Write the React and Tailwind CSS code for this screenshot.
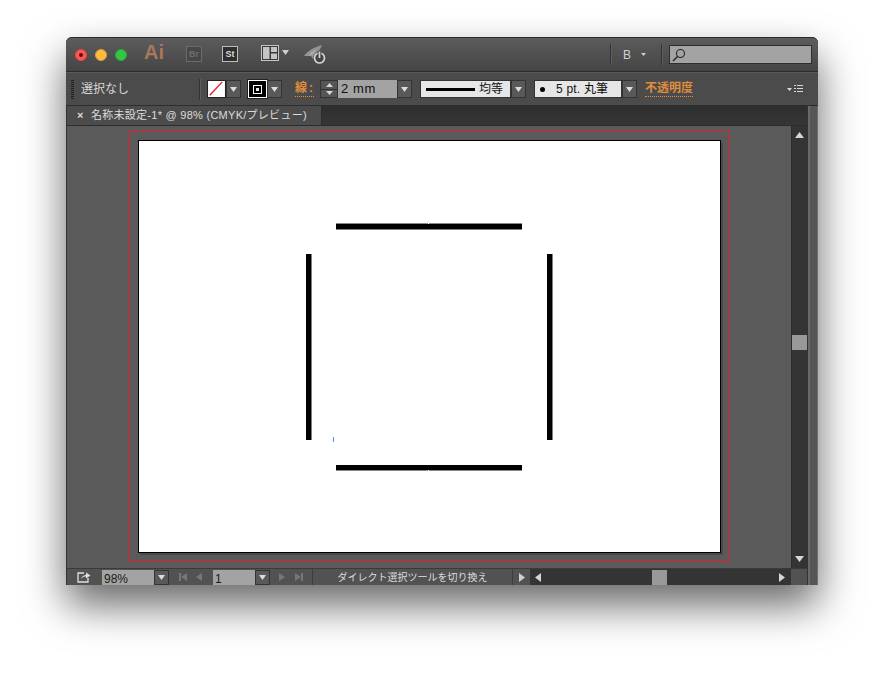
const font = { fontFamily: '"Liberation Sans", "Noto Sans CJK JP", sans-serif' };

function Tri({ dir = "down", w = 7, h = 5, color = "#d4d4d4" }) {
  const points = {
    down: "0,0 10,0 5,10",
    up: "0,10 10,10 5,0",
    left: "10,0 10,10 0,5",
    right: "0,0 0,10 10,5",
  };
  return (
    <svg width={w} height={h} viewBox="0 0 10 10" preserveAspectRatio="none" className="shrink-0 block">
      <polygon points={points[dir]} fill={color} />
    </svg>
  );
}

function Drop() {
  return (
    <div className="w-[15px] h-full flex items-center justify-center border border-[#333] bg-[#595959]">
      <Tri w={7} h={5} color="#dcdcdc" />
    </div>
  );
}

function Sep() {
  return <div className="w-px h-[21px] bg-[#333] border-r border-[#5f5f5f] box-content" />;
}

function TitleBar() {
  return (
    <div className="h-[35px] flex items-center bg-gradient-to-b from-[#5c5c5c] to-[#454545] border-t border-[#2a2a2a] rounded-t-[6px] border-b-[#2c2c2c] border-b">
      <div className="ml-[9px] w-3 h-3 rounded-full bg-[#fc5753] border border-[#df4744] flex items-center justify-center">
        <div className="w-1 h-1 rounded-full bg-[#5a0b08]" />
      </div>
      <div className="ml-2 w-3 h-3 rounded-full bg-[#fdbc40] border border-[#de9f34]" />
      <div className="ml-2 w-3 h-3 rounded-full bg-[#33c748] border border-[#27aa35]" />
      <div className="ml-[17px] w-5 text-[20px] font-bold leading-none text-[#a9775a] mb-[6px]">Ai</div>
      <div className="ml-[22px] w-4 h-4 border border-[#6b6b6b] bg-[#474747] text-[#6f6f6f] text-[9px] font-bold leading-[14px] text-center mb-[2px]">Br</div>
      <div className="ml-[20px] w-4 h-4 border border-[#bdbdbd] bg-[#2f2f2f] text-[#d8d8d8] text-[9px] font-bold leading-[14px] text-center mb-[2px]">St</div>
      <svg width="18" height="16" viewBox="0 0 18 16" className="ml-[23px] mb-[3px]">
        <rect x="0.5" y="0.5" width="17" height="15" fill="#3a3a3a" stroke="#c4c4c4" />
        <rect x="2" y="2" width="6.5" height="12" fill="#c4c4c4" />
        <rect x="10" y="2" width="6" height="5" fill="#c4c4c4" />
        <rect x="10" y="8.5" width="6" height="5.5" fill="#c4c4c4" />
      </svg>
      <div className="ml-[3px] mb-[5px]">
        <Tri w={7} h={5} color="#cfcfcf" />
      </div>
      <svg width="23" height="20" viewBox="0 0 23 20" className="ml-[15px]">
        <path d="M0 11 C3 7 6 5 8 4 C11 2 15 1 18 0 C17 3 15 6 13 7 C10 9 9 11 9 14 L7 11 L4 11 Z" fill="#949494" />
        <path d="M5 11 C6 8 9 6 12 5 L9 9 Z" fill="#b0b0b0" />
        <circle cx="15.5" cy="13" r="5" fill="#454545" stroke="#d4d4d4" strokeWidth="1.7" />
        <path d="M15.5 6.5 V13" stroke="#454545" strokeWidth="3.5" />
        <path d="M15.5 6.5 V13" stroke="#d4d4d4" strokeWidth="1.7" />
      </svg>
      <div className="ml-[283px]"><Sep /></div>
      <div className="ml-[11px] text-[12px] text-[#d0d0d0] w-[12px]">B</div>
      <div className="ml-[6px]"><Tri w={5} h={3} color="#cfcfcf" /></div>
      <div className="ml-[15px]"><Sep /></div>
      <div className="ml-[6px] w-[143px] h-[19px] bg-[#a3a3a3] border border-[#2e2e2e] flex items-center pl-[2px]">
        <svg width="14" height="14" viewBox="0 0 14 14">
          <circle cx="8.5" cy="5.5" r="4" fill="none" stroke="#262626" strokeWidth="1.1" />
          <path d="M5.5 8.5 L1 13" stroke="#262626" strokeWidth="1.4" />
        </svg>
      </div>
    </div>
  );
}

function ControlBar() {
  return (
    <div className="h-[34px] flex items-center bg-[#4b4b4b] border-b border-[#2e2e2e] border-t border-t-[#5a5a5a] text-[12px]">
      <div className="ml-[5px] w-[3px] h-[19px] bg-[repeating-linear-gradient(to_bottom,#1f1f1f_0px,#1f1f1f_1px,#4b4b4b_1px,#4b4b4b_2px)]" />
      <div className="ml-[7px] w-[118px] text-[#d8d8d8]">選択なし</div>
      <Sep />
      <div className="ml-[6px] h-[18px] flex">
        <svg width="19" height="18" viewBox="0 0 19 18" className="border border-[#222]">
          <rect width="19" height="18" fill="#fff" />
          <path d="M2 16 L16 1" stroke="#e0202c" strokeWidth="1.6" />
        </svg>
        <Drop />
      </div>
      <div className="ml-[7px] h-[18px] flex">
        <div className="w-[19px] h-[18px] bg-black border border-white outline outline-[#222] flex items-center justify-center">
          <div className="w-[9px] h-[9px] bg-white flex items-center justify-center">
            <div className="w-[7px] h-[7px] bg-black flex items-center justify-center">
              <div className="w-[3px] h-[3px] bg-[#e8e8e8]" />
            </div>
          </div>
        </div>
        <Drop />
      </div>
      <div className="ml-[13px] w-[19px] text-[#e08e3c] font-bold border-b border-dotted border-[#e08e3c] leading-[15px] tracking-[2px] whitespace-nowrap">線:</div>
      <div className="ml-[6px] w-[18px] h-[18px] border border-[#333] bg-[#555] flex flex-col items-center">
        <div className="flex-1 flex items-center"><Tri dir="up" w={7} h={4} /></div>
        <div className="w-full h-px bg-[#333]" />
        <div className="flex-1 flex items-center"><Tri w={7} h={4} /></div>
      </div>
      <div className="w-[59px] h-[18px] bg-[#a3a3a3] text-[13px] text-[#111] leading-[18px] pl-[3px] tracking-[0.6px]">2 mm</div>
      <div className="h-[18px]"><Drop /></div>
      <div className="ml-[8px] h-[18px] w-[91px] bg-[#e6e6e6] border border-[#333] flex items-center pl-[5px] gap-[4px]">
        <div className="w-[49px] h-[3px] bg-black" />
        <span className="text-[12px] text-[#111] whitespace-nowrap">均等</span>
      </div>
      <div className="h-[18px]"><Drop /></div>
      <div className="ml-[8px] h-[18px] w-[88px] bg-[#e6e6e6] border border-[#333] flex items-center pl-[5px] text-[12px] text-[#111] whitespace-nowrap">
        <div className="w-[5px] h-[5px] rounded-full bg-black" />
        <span className="ml-[11px] tracking-[0.2px]">5 pt. 丸筆</span>
      </div>
      <div className="h-[18px]"><Drop /></div>
      <div className="ml-[8px] w-[48px] text-[#e08e3c] font-bold border-b border-dotted border-[#e08e3c] leading-[15px] whitespace-nowrap">不透明度</div>
      <div className="ml-[94px] flex items-center gap-[2px]">
        <Tri w={5} h={3} color="#d8d8d8" />
        <svg width="9" height="8" viewBox="0 0 9 8">
          <path d="M0 .5H9M0 3.5H9M0 6.5H9" stroke="#d8d8d8" strokeDasharray="2 1 6 0" />
        </svg>
      </div>
    </div>
  );
}

function TabBar() {
  return (
    <div className="h-[20px] flex bg-gradient-to-b from-[#2e2e2e] to-[#363636] border-b border-[#2c2c2c]">
      <div className="w-[255px] h-full bg-[#4c4c4c] border-r border-[#2c2c2c] flex items-center pl-[10px] whitespace-nowrap text-[#dcdcdc] text-[11px]">
        <span className="w-[14px] leading-none font-bold">×</span>
        <span className="tracking-[0.27px]">名称未設定-1* @ 98% (CMYK/プレビュー)</span>
      </div>
    </div>
  );
}

function Artboard() {
  return (
    <div className="w-[583px] h-[413px] bg-white border border-black shadow-[2px_2px_0_rgba(0,0,0,0.18)]">
      <svg width="581" height="411" viewBox="0 0 581 411" className="block">
        <rect x="197" y="83" width="186" height="5.5" fill="#000" />
        <rect x="197" y="82" width="186" height="1" fill="#888" />
        <rect x="289" y="82" width="1" height="1" fill="#fff" />
        <rect x="197" y="324" width="186" height="5.5" fill="#000" />
        <rect x="197" y="329" width="186" height="1" fill="#888" />
        <rect x="289" y="329" width="1" height="1" fill="#fff" />
        <rect x="167" y="113" width="5.5" height="186" fill="#000" />
        <rect x="408" y="113" width="5.5" height="186" fill="#000" />
        <rect x="194" y="296" width="1" height="5" fill="#5588ee" />
      </svg>
    </div>
  );
}

function Canvas() {
  return (
    <div className="flex-1 flex min-h-0">
      <div className="flex-1 bg-[#5a5a5a] pl-[62px] pt-[5px]">
        <div className="w-[600px] h-[431px] border border-[#e0202c] pl-[8px] pt-[8px]">
          <Artboard />
        </div>
      </div>
      <div className="w-[16px] bg-[#343434] border-l border-[#2b2b2b] flex flex-col items-center pt-[6px] pb-[6px]">
        <Tri dir="up" w={9} h={6} color="#d6d6d6" />
        <div className="mt-[197px] w-[15px] h-[15px] bg-[#999]" />
        <div className="mt-auto">
          <Tri w={9} h={6} color="#d6d6d6" />
        </div>
      </div>
    </div>
  );
}

function StatusBar() {
  return (
    <div className="h-[17px] flex items-center bg-[#525252] border-t border-[#3a3a3a] text-[11px]">
      <svg width="14" height="12" viewBox="0 0 14 12" className="ml-[10px]">
        <path d="M7 2H1V11H11V7" fill="none" stroke="#e0e0e0" strokeWidth="1.3" />
        <path d="M4 8C5 5 7 4 9 4V1.5L13.5 4.5L9 7.5V5.5C7 5.5 5.5 6 4 8Z" fill="#e0e0e0" />
      </svg>
      <div className="ml-[11px] w-[52px] h-[15px] bg-[#a3a3a3] text-[#1a1a1a] leading-[18px] pl-[2px] text-[12px] overflow-hidden">98%</div>
      <div className="h-[15px]"><Drop /></div>
      <div className="ml-[10px] w-[28px] flex items-center">
        <div className="w-[2px] h-[8px] bg-[#767676]" />
        <Tri dir="left" w={6} h={8} color="#767676" />
        <div className="ml-[9px]"><Tri dir="left" w={6} h={8} color="#767676" /></div>
      </div>
      <div className="ml-[6px] w-[42px] h-[15px] bg-[#a3a3a3] text-[#1a1a1a] leading-[18px] pl-[2px] text-[12px] overflow-hidden">1</div>
      <div className="h-[15px]"><Drop /></div>
      <div className="ml-[9px] w-[27px] flex items-center">
        <Tri dir="right" w={6} h={8} color="#767676" />
        <div className="ml-[10px]"><Tri dir="right" w={6} h={8} color="#767676" /></div>
        <div className="w-[2px] h-[8px] bg-[#767676]" />
      </div>
      <div className="ml-[6px] w-[201px] h-full border-x border-[#3d3d3d] text-center text-[#dcdcdc] text-[10px] leading-[17px] whitespace-nowrap">
        ダイレクト選択ツールを切り換え
      </div>
      <div className="w-[17px] flex justify-center">
        <Tri dir="right" w={6} h={9} color="#cfcfcf" />
      </div>
      <div className="w-[261px] h-full bg-[#343434] flex items-center pl-[5px] pr-[6px]">
        <Tri dir="left" w={6} h={9} color="#d6d6d6" />
        <div className="ml-[111px] w-[15px] h-[15px] bg-[#999]" />
        <div className="ml-auto">
          <Tri dir="right" w={6} h={9} color="#d6d6d6" />
        </div>
      </div>
    </div>
  );
}

export default function App() {
  return (
    <div className="w-[884px] h-[675px] bg-white pt-[37px] pl-[66px] overflow-hidden" style={font}>
      <div className="w-[752px] h-[548px] flex flex-col rounded-t-[6px] bg-[#4b4b4b] shadow-[0_20px_42px_rgba(0,0,0,0.6)]">
        <TitleBar />
        <ControlBar />
        <div className="flex-1 flex min-h-0">
          <div className="w-[741px] flex flex-col min-h-0 border-l border-[#333]">
            <TabBar />
            <Canvas />
            <StatusBar />
          </div>
          <div className="flex-1 flex bg-[#565656]">
            <div className="w-[3px] bg-[#6a6a6a] border-l border-[#333]" />
            <div className="flex-1 border-r border-[#6e6e6e]" />
          </div>
        </div>
      </div>
    </div>
  );
}
